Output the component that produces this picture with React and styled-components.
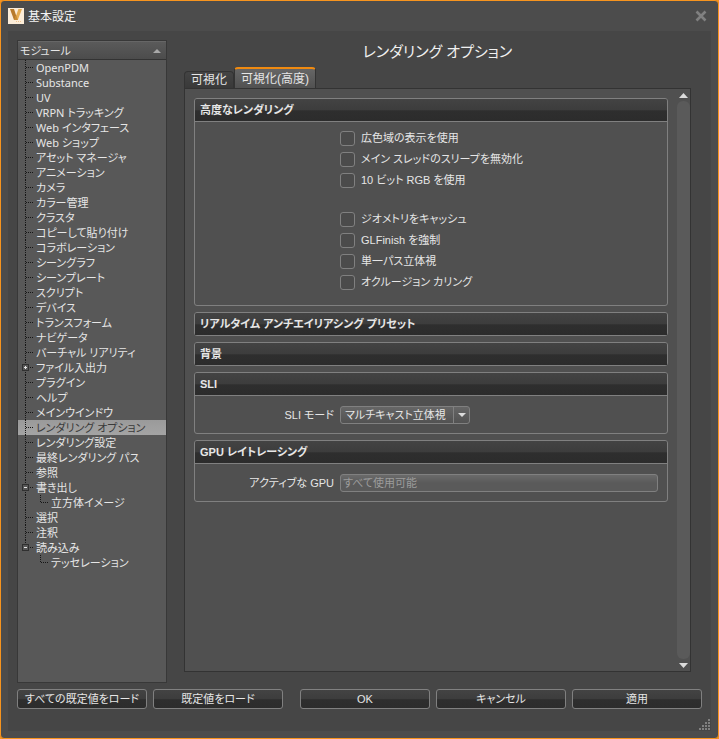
import React, { useState } from "react";
import styled, { createGlobalStyle, css } from "styled-components";

const GlobalStyle = createGlobalStyle`
  *, *::before, *::after { box-sizing: border-box; }
  body {
    margin: 0;
    background: #f7941e;
    color: #e6e6e6;
    font-family: "Liberation Sans", "Noto Sans CJK JP", sans-serif;
    font-size: 11px;
    line-height: 15px;
    font-feature-settings: "palt";
  }
  button, input, select {
    font: inherit;
    font-feature-settings: inherit;
    color: inherit;
    margin: 0;
    padding: 0;
  }
`;

const glossy = css`
  background: linear-gradient(#434343 0, #3d3d3d 48%, #2e2e2e 54%, #2c2c2c 100%);
`;

const Window = styled.div`
  display: flex;
  flex-direction: column;
  min-height: 100vh;
  padding: 0 7px 7px;
  border: 1px solid #f7941e;
  border-radius: 4px;
  background: #4c4c4c;
`;

const TitleBar = styled.header`
  display: flex;
  align-items: center;
  gap: 4px;
  height: 30px;
`;

const WindowTitle = styled.h1`
  flex: 1;
  margin: 0;
  font-family: "Noto Sans", "Noto Sans CJK JP", sans-serif;
  font-size: 12px;
  font-weight: 400;
  color: #f4f4f4;
`;

const CloseButton = styled.button`
  display: flex;
  padding: 4px;
  border: 0;
  background: none;
`;

const Client = styled.main`
  display: flex;
  flex-direction: column;
  flex: 1;
  padding: 9px 0 0 9px;
  background: #464646;
`;

const Columns = styled.div`
  display: flex;
  flex: 1;
  gap: 17px;
  padding-right: 20px;
`;

const TreePanel = styled.nav`
  flex: 0 0 150px;
  border: 1px solid #383838;
  background: #585858;
  font-family: "Noto Sans", "Noto Sans CJK JP", sans-serif;
`;

const TreeHeader = styled.button`
  display: flex;
  align-items: center;
  justify-content: space-between;
  width: 100%;
  height: 19px;
  padding: 0 5px 0 2px;
  border: 0;
  border-top: 1px solid #666;
  border-bottom: 1px solid #333;
  background: linear-gradient(#5a5a5a, #4c4c4c);
`;

const TreeList = styled.ul`
  margin: 0;
  padding: 0;
  list-style: none;
`;

const TreeRow = styled.button`
  display: flex;
  align-items: center;
  width: 100%;
  height: 15px;
  padding-left: 3px;
  gap: 3px;
  border: 0;
  text-align: left;
  white-space: nowrap;
  color: ${(p) => (p.$selected ? "#3a3a3a" : "#e6e6e6")};
  background: ${(p) => (p.$selected ? "linear-gradient(#9a9a9a, #a4a4a4)" : "none")};
`;

const TabArea = styled.section`
  display: flex;
  flex-direction: column;
  flex: 1;
  min-width: 0;
  padding-bottom: 11px;
`;

const PageTitle = styled.h2`
  margin: 0 0 5px;
  padding-top: 2px;
  font-size: 15px;
  line-height: 20px;
  font-weight: 400;
  text-align: center;
  color: #f0f0f0;
`;

const TabList = styled.div`
  display: flex;
  align-items: flex-end;
  height: 21px;
`;

const Tab = styled.button`
  height: ${(p) => (p.$active ? 22 : 17)}px;
  margin-bottom: ${(p) => (p.$active ? -1 : 0)}px;
  padding: 0 6px;
  border: 1px solid #333;
  border-bottom: 0;
  border-top: ${(p) => (p.$active ? "2px solid #f08a10" : "1px solid #333")};
  border-radius: 4px 4px 0 0;
  font-size: 12px;
  line-height: 14px;
  white-space: nowrap;
  background: ${(p) => (p.$active ? "linear-gradient(#666, #505050)" : "linear-gradient(#444, #393939)")};
`;

const TabPanel = styled.div`
  display: flex;
  flex: 1;
  gap: 9px;
  border: 1px solid #333;
  background: #505050;
`;

const Groups = styled.div`
  display: flex;
  flex-direction: column;
  flex: 1;
  gap: 6px;
  padding: 9px 0 0 9px;
`;

const GroupBox = styled.section`
  border: 1px solid #808080;
  border-radius: 3px;
`;

const GroupTitle = styled.h3`
  margin: 0;
  font-size: 11px;
  font-weight: 700;
`;

const GroupToggle = styled.button`
  display: block;
  width: 100%;
  height: 22px;
  padding: 1px 0 0 5px;
  border: 0;
  border-radius: 2px 2px 0 0;
  text-align: left;
  ${glossy}
`;

const GroupBody = styled.div`
  display: grid;
  grid-template-columns: 139px minmax(0, 1fr);
  align-items: center;
  column-gap: 6px;
  padding: ${(p) => (p.$checks ? "9px 9px 15px 0" : "10px 9px 9px 0")};
  border-top: 1px solid #808080;
`;

const FieldLabel = styled.label`
  text-align: right;
  white-space: nowrap;
`;

const CheckColumn = styled.div`
  display: flex;
  flex-direction: column;
  grid-column: 2;
  gap: 24px;
`;

const CheckSet = styled.div`
  display: flex;
  flex-direction: column;
  gap: 6px;
`;

const CheckLabel = styled.label`
  display: flex;
  align-items: center;
  align-self: flex-start;
  gap: 6px;
  height: 15px;
  white-space: nowrap;
`;

const CheckBox = styled.input`
  appearance: none;
  width: 15px;
  height: 15px;
  border: 1px solid #808080;
  border-radius: 3px;
  background: #4b4b4b;
  &:checked { background: #f08a10; }
`;

const SelectWrap = styled.div`
  position: relative;
  justify-self: start;
  width: 130px;
  height: 18px;
`;

const Select = styled.select`
  appearance: none;
  display: block;
  width: 100%;
  height: 18px;
  padding: 0 18px 0 4px;
  border: 1px solid #808080;
  border-radius: 3px;
  line-height: 14px;
  background: linear-gradient(#666, #525252);
`;

const SelectArrow = styled.span`
  position: absolute;
  top: 1px;
  right: 1px;
  bottom: 1px;
  display: flex;
  align-items: center;
  justify-content: center;
  width: 16px;
  border-left: 1px solid #808080;
  pointer-events: none;
`;

const TextBox = styled.input`
  width: 100%;
  height: 18px;
  padding: 0 2px;
  border: 1px solid #808080;
  border-radius: 3px;
  color: #9c9c9c;
  background: linear-gradient(#6a6a6a, #5a5a5a 50%);
  &::placeholder { color: #9c9c9c; opacity: 1; }
`;

const ScrollBar = styled.div`
  display: flex;
  flex-direction: column;
  width: 13px;
`;

const ScrollButton = styled.button`
  display: flex;
  align-items: center;
  justify-content: center;
  height: 12px;
  border: 0;
  background: none;
`;

const ScrollThumb = styled.div`
  flex: 1;
  border-radius: 6px;
  background: #5a5a5a;
`;

const ButtonBar = styled.footer`
  display: grid;
  grid-template-columns: 1fr 1fr 5px 1fr 1fr 1fr;
  column-gap: 6px;
  padding: 6px 9px 0 0;
`;

const PushButton = styled.button`
  height: 20px;
  border: 1px solid #808080;
  border-radius: 3px;
  line-height: 16px;
  white-space: nowrap;
  ${glossy}
`;

const GripRow = styled.div`
  display: flex;
  justify-content: flex-end;
  align-items: flex-end;
  height: 22px;
`;

const Logo = () => (
  <svg width="16" height="16" viewBox="0 0 16 16" aria-hidden="true">
    <rect width="16" height="16" fill="#fbecd8" />
    <path d="M2 1h4l2.4 7.2L7.4 12H6z" fill="#b87a2a" />
    <path d="M10.4 1H14L9.8 12H6.6z" fill="#e6ac52" />
    <path d="M6 12l2.2-5 1.6 5z" fill="#c98a30" />
    <path d="M8 13.5h6" stroke="#f0c490" strokeDasharray="1 1" />
  </svg>
);

const Triangle = ({ up, w = 9, h = 5, color = "#dcdcdc" }) => (
  <svg width={w} height={h} viewBox={`0 0 ${w} ${h}`} aria-hidden="true">
    <path d={up ? `M0 ${h}L${w / 2} 0L${w} ${h}z` : `M0 0H${w}L${w / 2} ${h}z`} fill={color} />
  </svg>
);

const Branch = ({ kind, last }) => (
  <svg width="12" height="15" viewBox="0 0 12 15" shapeRendering="crispEdges" aria-hidden="true">
    <path d={last ? "M4.5 0V8" : "M4.5 0V15"} stroke="#161616" strokeDasharray="1 1" />
    <path d="M5 7.5H12" stroke="#161616" strokeDasharray="1 1" />
    {kind && (
      <>
        <rect x="1.5" y="4.5" width="6" height="6" fill="#585858" stroke="#303030" />
        <path d={kind === "open" ? "M3 7.5H6" : "M3 7.5H6M4.5 6V9"} stroke="#e6e6e6" />
      </>
    )}
  </svg>
);

const NestedBranch = ({ lined }) => (
  <svg width="27" height="15" viewBox="0 0 27 15" shapeRendering="crispEdges" aria-hidden="true">
    <path
      d={`${lined ? "M4.5 0V15" : ""}M19.5 0V8M20 7.5H27`}
      fill="none"
      stroke="#161616"
      strokeDasharray="1 1"
    />
  </svg>
);

const Grip = () => (
  <svg width="12" height="12" viewBox="0 0 12 12" shapeRendering="crispEdges" aria-hidden="true">
    <path
      d="M9 0h2v2H9zM6 3h2v2H6zM9 3h2v2H9zM3 6h2v2H3zM6 6h2v2H6zM9 6h2v2H9zM0 9h2v2H0zM3 9h2v2H3zM6 9h2v2H6zM9 9h2v2H9z"
      fill="#808080"
    />
  </svg>
);

const modules = [
  ["OpenPDM"], ["Substance"], ["UV"], ["VRPN トラッキング"], ["Web インタフェース"],
  ["Web ショップ"], ["アセット マネージャ"], ["アニメーション"], ["カメラ"], ["カラー管理"],
  ["クラスタ"], ["コピーして貼り付け"], ["コラボレーション"], ["シーングラフ"], ["シーンプレート"],
  ["スクリプト"], ["デバイス"], ["トランスフォーム"], ["ナビゲータ"], ["バーチャル リアリティ"],
  ["ファイル入出力", "closed"], ["プラグイン"], ["ヘルプ"], ["メインウインドウ"],
  ["レンダリング オプション"], ["レンダリング設定"], ["最終レンダリング パス"], ["参照"],
  ["書き出し", "open", "立方体イメージ"], ["選択"], ["注釈"], ["読み込み", "open", "テッセレーション"],
];

const checks = [
  ["広色域の表示を使用", "メイン スレッドのスリープを無効化", "10 ビット RGB を使用"],
  ["ジオメトリをキャッシュ", "GLFinish を強制", "単一パス立体視", "オクルージョン カリング"],
];

const ModuleTree = () => {
  const [selected, setSelected] = useState("レンダリング オプション");
  return (
    <TreePanel aria-label="モジュール">
      <TreeHeader type="button">
        モジュール
        <Triangle up w={8} h={4} color="#a8a8a8" />
      </TreeHeader>
      <TreeList>
        {modules.map(([name, kind, child], i) => {
          const last = i === modules.length - 1;
          return (
            <li key={name}>
              <TreeRow type="button" $selected={name === selected} onClick={() => setSelected(name)}>
                <Branch kind={kind} last={last} />
                {name}
              </TreeRow>
              {child && (
                <TreeList>
                  <li>
                    <TreeRow type="button" $selected={child === selected} onClick={() => setSelected(child)}>
                      <NestedBranch lined={!last} />
                      {child}
                    </TreeRow>
                  </li>
                </TreeList>
              )}
            </li>
          );
        })}
      </TreeList>
    </TreePanel>
  );
};

const Group = ({ title, checks: isChecks, children }) => (
  <GroupBox>
    <GroupTitle>
      <GroupToggle type="button" aria-expanded={Boolean(children)}>{title}</GroupToggle>
    </GroupTitle>
    {children && <GroupBody $checks={isChecks}>{children}</GroupBody>}
  </GroupBox>
);

export default function App() {
  return (
    <>
      <GlobalStyle />
      <Window>
        <TitleBar>
          <Logo />
          <WindowTitle>基本設定</WindowTitle>
          <CloseButton type="button" aria-label="閉じる">
            <svg width="12" height="12" viewBox="0 0 12 12" aria-hidden="true">
              <path d="M1.5 1.5l9 9M10.5 1.5l-9 9" stroke="#808080" strokeWidth="2.6" />
            </svg>
          </CloseButton>
        </TitleBar>
        <Client>
          <Columns>
            <ModuleTree />
            <TabArea>
              <PageTitle>レンダリング オプション</PageTitle>
              <TabList role="tablist">
                <Tab type="button" role="tab" aria-selected="false">可視化</Tab>
                <Tab type="button" role="tab" aria-selected="true" $active>可視化(高度)</Tab>
              </TabList>
              <TabPanel role="tabpanel">
                <Groups>
                  <Group title="高度なレンダリング" checks>
                    <CheckColumn>
                      {checks.map((set) => (
                        <CheckSet key={set[0]}>
                          {set.map((label) => (
                            <CheckLabel key={label}>
                              <CheckBox type="checkbox" />
                              {label}
                            </CheckLabel>
                          ))}
                        </CheckSet>
                      ))}
                    </CheckColumn>
                  </Group>
                  <Group title="リアルタイム アンチエイリアシング プリセット" />
                  <Group title="背景" />
                  <Group title="SLI">
                    <FieldLabel htmlFor="sli-mode">SLI モード</FieldLabel>
                    <SelectWrap>
                      <Select id="sli-mode">
                        <option>マルチキャスト立体視</option>
                      </Select>
                      <SelectArrow><Triangle w={8} h={4} /></SelectArrow>
                    </SelectWrap>
                  </Group>
                  <Group title="GPU レイトレーシング">
                    <FieldLabel htmlFor="active-gpu">アクティブな GPU</FieldLabel>
                    <TextBox id="active-gpu" type="text" placeholder="すべて使用可能" disabled />
                  </Group>
                </Groups>
                <ScrollBar>
                  <ScrollButton type="button" aria-label="上へ"><Triangle up /></ScrollButton>
                  <ScrollThumb />
                  <ScrollButton type="button" aria-label="下へ"><Triangle /></ScrollButton>
                </ScrollBar>
              </TabPanel>
            </TabArea>
          </Columns>
          <ButtonBar>
            <PushButton type="button">すべての既定値をロード</PushButton>
            <PushButton type="button">既定値をロード</PushButton>
            <span />
            <PushButton type="button">OK</PushButton>
            <PushButton type="button">キャンセル</PushButton>
            <PushButton type="button">適用</PushButton>
          </ButtonBar>
          <GripRow><Grip /></GripRow>
        </Client>
      </Window>
    </>
  );
}
